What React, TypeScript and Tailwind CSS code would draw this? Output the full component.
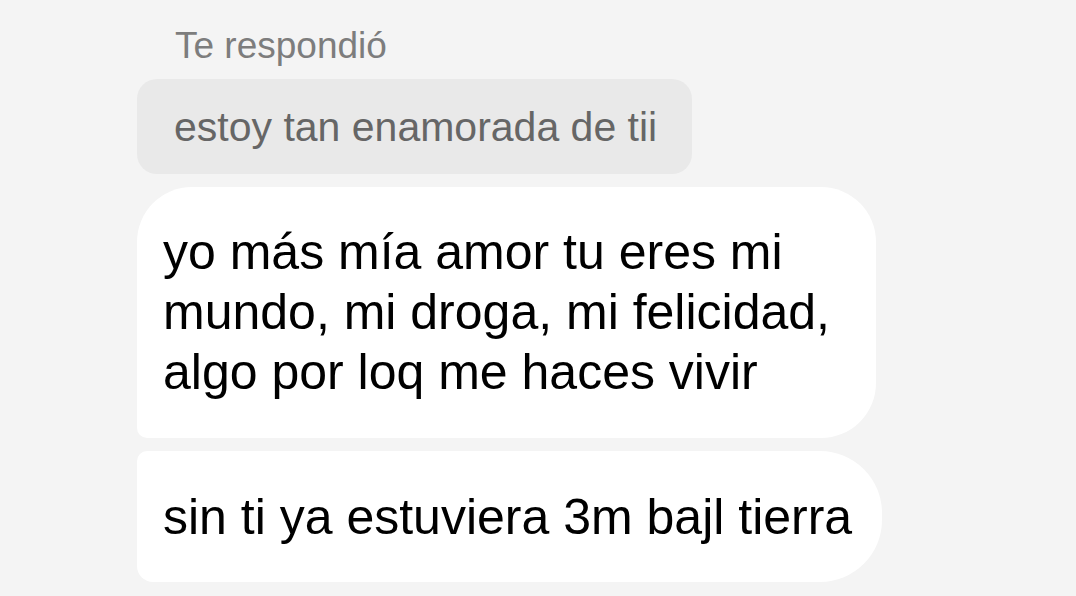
const font = { fontFamily: '"Liberation Sans", Arial, sans-serif' };

export default function App() {
  return (
    <div className="w-[1076px] h-[596px] overflow-hidden bg-[#f4f4f4] pl-[137px]" style={font}>
      <div className="flex flex-col items-start">
        {/* etiqueta de respuesta */}
        <div className="pt-[24px] pl-[38px] text-[37px] leading-[44px] text-[#7d7d7d]">
          Te respondió
        </div>

        {/* mensaje citado */}
        <div className="mt-[11px] flex h-[95px] w-[555px] items-center rounded-[20px] bg-[#e9e9e9] pl-[37px] text-[41px] leading-[48px] text-[#666666]">
          estoy tan enamorada de tii
        </div>

        <div className="mt-[13px] h-[251px] w-[739px] rounded-tl-[55px] rounded-tr-[55px] rounded-br-[55px] rounded-bl-[10px] bg-white pl-[26px] pt-[35px] text-[50px] leading-[60px] text-black">
          <span className="block whitespace-nowrap">yo más mía amor tu eres mi</span>
          <span className="block whitespace-nowrap">mundo, mi droga, mi felicidad,</span>
          <span className="block whitespace-nowrap">algo por loq me haces vivir</span>
        </div>

        <div className="mt-[13px] flex h-[131px] w-[745px] items-center rounded-tl-[10px] rounded-bl-[16px] rounded-tr-[62px] rounded-br-[62px] bg-white pl-[26px] text-[50px] leading-[60px] text-black">
          <span className="whitespace-nowrap">sin ti ya estuviera 3m bajl tierra</span>
        </div>
      </div>
    </div>
  );
}
